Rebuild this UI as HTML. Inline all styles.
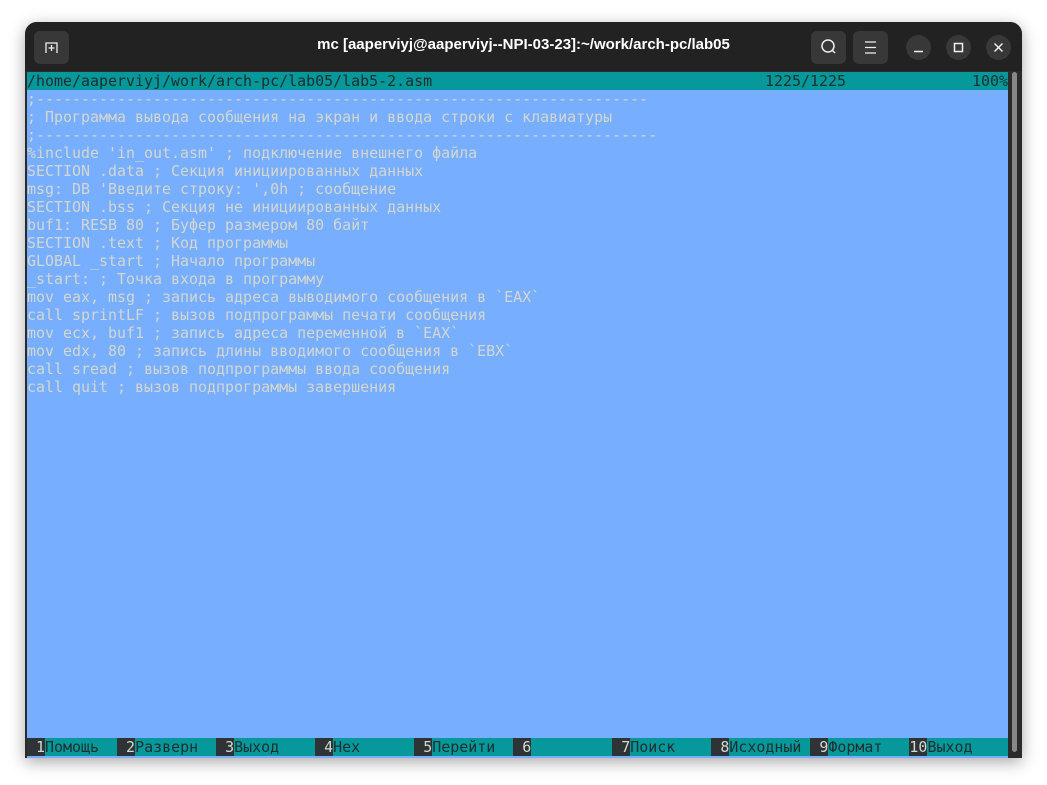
<!DOCTYPE html>
<html><head><meta charset="utf-8"><style>
*{margin:0;padding:0;box-sizing:border-box}
body{width:1047px;height:785px;background:#fff;position:relative;overflow:hidden;font-family:"DejaVu Sans Mono","Liberation Mono",monospace}
.win{position:absolute;left:25px;top:22px;width:997px;height:736px;background:#2b2b2b;border-radius:12px 12px 0 0;box-shadow:0 4px 16px rgba(0,0,0,.35);overflow:hidden}
.tb{position:absolute;left:0;top:0;width:100%;height:49px;background:#222222}
.title{position:absolute;left:0;right:0;top:14px;text-align:center;color:#fff;font:bold 15px "Liberation Sans",sans-serif}
.btn{position:absolute;top:9px;width:35px;height:33px;background:#383838;border-radius:6px}
.cb{position:absolute;top:13px;width:25px;height:25px;border-radius:50%;background:#383838}
.term{position:absolute;left:2px;top:50px;width:981px;height:686px;background:#78aefe;overflow:hidden}
.row{position:absolute;left:0;height:18px;width:981px;font-size:14.96px;line-height:18px;white-space:pre;color:#d3d7cf;overflow:hidden}
.stat{background:#06989a;color:#1f2e2e;top:0}
.bar{top:666px;background:#06989a;color:#1f2e2e;display:flex}
.n{background:#2e3436;color:#d3d7cf}
.sb{position:absolute;left:987px;top:50px;width:5px;height:680px;background:#888;border-radius:3px}
</style></head><body>
<div class="win">
<div class="tb">
<div class="btn" style="left:9px"><svg width="35" height="33" viewBox="0 0 35 33"><path d="M12 22V12h11v10M17.5 14v6M14.5 17h6" stroke="#eee" stroke-width="1.3" fill="none"/></svg></div>
<div class="title">mc [aaperviyj@aaperviyj--NPI-03-23]:~/work/arch-pc/lab05</div>
<div class="btn" style="left:786px"><svg width="35" height="33"><circle cx="17" cy="15" r="6" stroke="#eee" stroke-width="1.5" fill="none"/><path d="M21 19l3 3" stroke="#eee" stroke-width="1.5"/></svg></div>
<div class="btn" style="left:828px"><svg width="35" height="33"><path d="M12 11h11M12 16.5h11M12 22h11" stroke="#eee" stroke-width="1.3"/></svg></div>
<div class="cb" style="left:881px"><svg width="25" height="25"><path d="M8 16.5h9" stroke="#eee" stroke-width="1.5"/></svg></div>
<div class="cb" style="left:921px"><svg width="25" height="25"><rect x="8.5" y="8.5" width="8" height="8" stroke="#eee" stroke-width="1.5" fill="none"/></svg></div>
<div class="cb" style="left:961px"><svg width="25" height="25"><path d="M8.5 8.5l8 8M16.5 8.5l-8 8" stroke="#eee" stroke-width="1.5"/></svg></div>
</div>
<div class="term">
<div class="row stat">/home/aaperviyj/work/arch-pc/lab05/lab5-2.asm<span style="position:absolute;left:738px">1225/1225</span><span style="position:absolute;right:0">100%</span></div>
<div class="row" style="top:18px">;--------------------------------------------------------------------</div>
<div class="row" style="top:36px">; Программа вывода сообщения на экран и ввода строки с клавиатуры</div>
<div class="row" style="top:54px">;---------------------------------------------------------------------</div>
<div class="row" style="top:72px">%include 'in_out.asm' ; подключение внешнего файла</div>
<div class="row" style="top:90px">SECTION .data ; Секция инициированных данных</div>
<div class="row" style="top:108px">msg: DB 'Введите строку: ',0h ; сообщение</div>
<div class="row" style="top:126px">SECTION .bss ; Секция не инициированных данных</div>
<div class="row" style="top:144px">buf1: RESB 80 ; Буфер размером 80 байт</div>
<div class="row" style="top:162px">SECTION .text ; Код программы</div>
<div class="row" style="top:180px">GLOBAL _start ; Начало программы</div>
<div class="row" style="top:198px">_start: ; Точка входа в программу</div>
<div class="row" style="top:216px">mov eax, msg ; запись адреса выводимого сообщения в `EAX`</div>
<div class="row" style="top:234px">call sprintLF ; вызов подпрограммы печати сообщения</div>
<div class="row" style="top:252px">mov ecx, buf1 ; запись адреса переменной в `EAX`</div>
<div class="row" style="top:270px">mov edx, 80 ; запись длины вводимого сообщения в `EBX`</div>
<div class="row" style="top:288px">call sread ; вызов подпрограммы ввода сообщения</div>
<div class="row" style="top:306px">call quit ; вызов подпрограммы завершения</div>
<div class="row bar"><span class="n"> 1</span><span>Помощь  </span><span class="n"> 2</span><span>Разверн  </span><span class="n"> 3</span><span>Выход    </span><span class="n"> 4</span><span>Hex      </span><span class="n"> 5</span><span>Перейти  </span><span class="n"> 6</span><span>         </span><span class="n"> 7</span><span>Поиск    </span><span class="n"> 8</span><span>Исходный </span><span class="n"> 9</span><span>Формат   </span><span class="n">10</span><span>Выход    </span></div>
</div>
<div class="sb"></div>
</div>
</body></html>
